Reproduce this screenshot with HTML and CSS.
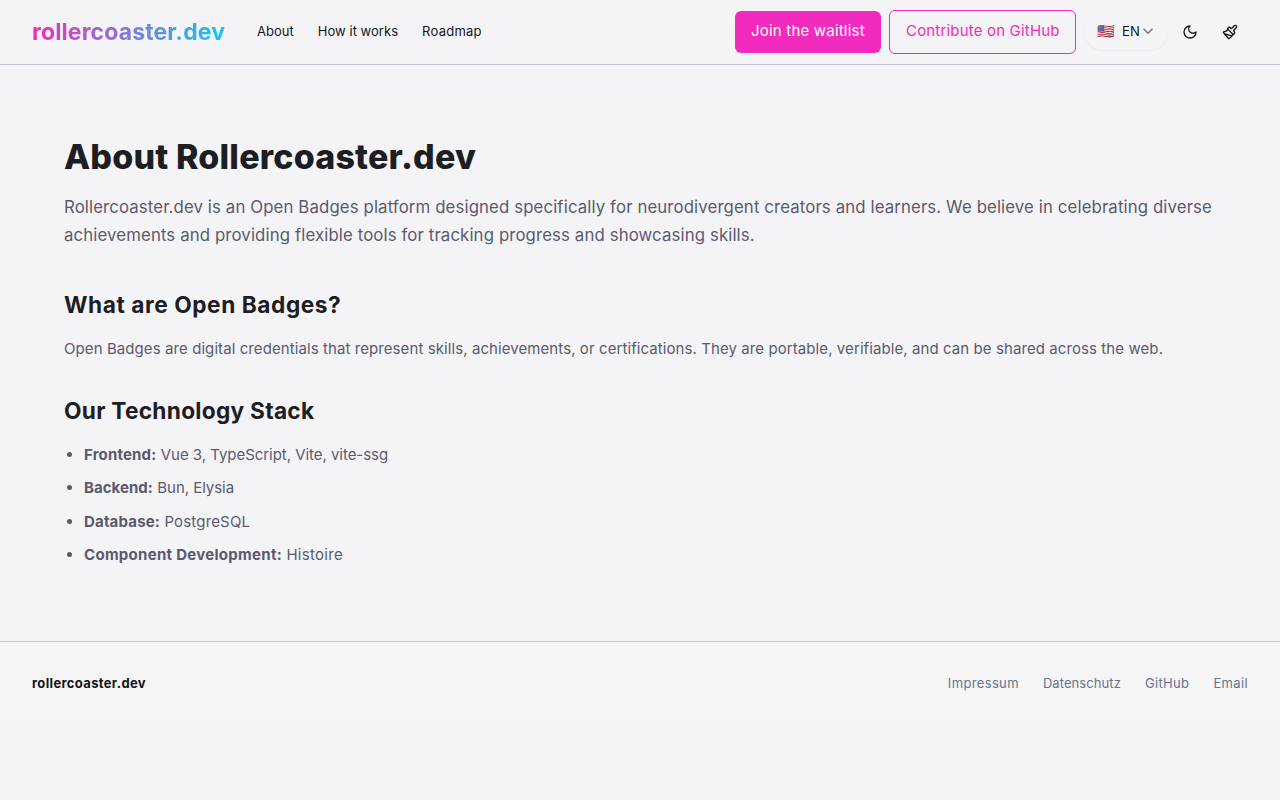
FILE: index.html
```html
<!DOCTYPE html>
<html lang="en">
<head>
<meta charset="utf-8">
<title>About Rollercoaster.dev</title>
<link rel="stylesheet" href="styles.css">
</head>
<body>
<header class="site-header">
  <a class="logo">rollercoaster.dev</a>
  <nav class="main-nav"><a>About</a><a>How it works</a><a class="roadmap">Roadmap</a></nav>
  <div class="actions">
    <a class="button button-primary">Join the waitlist</a>
    <a class="button button-outline">Contribute on GitHub</a>
    <button class="language"><span class="flag">🇺🇸</span><span class="code">EN</span>
      <svg class="chevron" viewBox="0 0 12 12"><path d="M1.5 3.8 6 8.3l4.5-4.5"/></svg>
    </button>
    <button class="icon-button"><svg class="icon" viewBox="0 0 24 24"><path d="M12 3a6 6 0 0 0 9 9 9 9 0 1 1-9-9Z"/></svg></button>
    <button class="icon-button"><svg class="icon" viewBox="0 0 24 24"><path d="m14.622 17.897-10.68-2.913"/><path d="M18.376 2.622a1 1 0 1 1 3.002 3.002L17.36 9.643a.5.5 0 0 0 0 .707l.944.944a2.41 2.41 0 0 1 0 3.408l-.944.944a.5.5 0 0 1-.707 0L8.354 7.348a.5.5 0 0 1 0-.707l.944-.944a2.41 2.41 0 0 1 3.408 0l.944.944a.5.5 0 0 0 .707 0z"/><path d="M9 8c-1.804 2.71-3.97 3.46-6.583 3.948a.507.507 0 0 0-.302.819l7.32 8.883a1 1 0 0 0 1.185.204C12.735 20.405 16 16.792 16 15"/></svg></button>
  </div>
</header>
<main class="content">
  <h1>About Rollercoaster.dev</h1>
  <p class="lead">Rollercoaster.dev is an Open Badges platform designed specifically for neurodivergent creators and learners. We believe in celebrating diverse<br>achievements and providing flexible tools for tracking progress and showcasing skills.</p>
  <h2 class="badges-title">What are Open Badges?</h2>
  <p class="text">Open Badges are digital credentials that represent skills, achievements, or certifications. They are portable, verifiable, and can be shared across the web.</p>
  <h2 class="stack-title">Our Technology Stack</h2>
  <ul class="stack">
    <li><strong>Frontend:</strong> <span class="tight">Vue 3, TypeScript, Vite, vite-ssg</span></li>
    <li><strong class="narrow">Backend:</strong> <span class="tight">Bun, Elysia</span></li>
    <li><strong>Database:</strong> <span>PostgreSQL</span></li>
    <li><strong class="wide">Component Development:</strong> <span class="wide">Histoire</span></li>
  </ul>
</main>
<footer class="site-footer">
  <strong class="footer-name">rollercoaster.dev</strong>
  <nav class="footer-nav"><a>Impressum</a><a class="privacy">Datenschutz</a><a>GitHub</a><a>Email</a></nav>
</footer>
</body>
</html>
```

FILE: styles.css
```css
* { box-sizing: border-box; }
body { margin: 0; background: #f4f4f6; color: #15151a; font-family: Inter, "Noto Sans", sans-serif; font-size: 15px; }
button { border: 0; background: none; padding: 0; color: inherit; font: inherit; }

.site-header { display: flex; align-items: center; height: 65px; padding: 0 30px 0 32px; border-bottom: 1px solid #c5c3d3; }
.logo { width: 193px; font-size: 23px; font-weight: 700; line-height: 36px; letter-spacing: .12px; color: transparent; background: linear-gradient(90deg, #f02bbd, #10c8f4); background-clip: text; }
.main-nav { display: flex; gap: 24px; margin-left: 32px; padding-bottom: 2px; font-size: 13px; letter-spacing: .03px; }
.roadmap { letter-spacing: .25px; }

.actions { display: flex; align-items: center; margin-left: auto; }
.button { display: flex; align-items: center; border-radius: 6px; margin-right: 8px; padding: 0 0 3px 16px; white-space: nowrap; }
.button-primary { width: 146px; height: 42px; background: #f02bbd; color: #fff; letter-spacing: .2px; }
.button-outline { width: 187px; height: 44px; border: 1px solid #f02bbd; color: #f02bbd; letter-spacing: .18px; }
.language { display: flex; align-items: center; width: 84px; height: 38px; margin: 0 2px 2px 0; border-radius: 19px; padding-left: 13px; font-size: 13px; box-shadow: 0 1px 2px #0000000d; }
.flag { width: 25px; padding-bottom: 1px; text-align: left; font-size: 14px; }
.code { width: 20px; text-align: left; letter-spacing: .2px; }
.chevron { width: 12px; height: 12px; fill: none; stroke: #777; stroke-width: 1.5; }
.icon-button { display: flex; align-items: center; justify-content: center; width: 40px; height: 40px; }
.icon { width: 16px; height: 16px; fill: none; stroke: currentColor; stroke-width: 2; stroke-linecap: round; stroke-linejoin: round; }

.content { height: 576px; padding: 64px; color: #5a5a6e; }
h1 { margin: 0 0 8px; font-size: 34px; font-weight: 800; line-height: 56px; letter-spacing: .18px; color: #1d1d24; }
h2 { margin: 0; font-size: 22.7px; line-height: 32px; color: #1d1d24; }
p { margin: 0; white-space: nowrap; }
.lead { font-size: 16.8px; line-height: 28px; letter-spacing: .117px; }
.badges-title { margin: 40px 0 15px; letter-spacing: .55px; }
.text { line-height: 26px; letter-spacing: .085px; }
.stack-title { margin: 33px 0 15px; letter-spacing: .27px; }
.stack { margin: 0; padding-left: 20px; }
.stack li { line-height: 25.4px; margin-bottom: 8px; letter-spacing: .17px; }
.stack .tight { letter-spacing: -.04px; }
.stack .narrow { letter-spacing: .04px; }
.stack .wide { letter-spacing: .29px; }

.site-footer { display: flex; justify-content: space-between; align-items: center; height: 85px; border-top: 1px solid #c5c7d3; padding: 0 32px 2px; font-size: 13px; letter-spacing: .35px; background: #f5f5f5; }
.footer-nav { display: flex; gap: 24px; color: #64748b; }
.privacy { letter-spacing: .08px; }
```
